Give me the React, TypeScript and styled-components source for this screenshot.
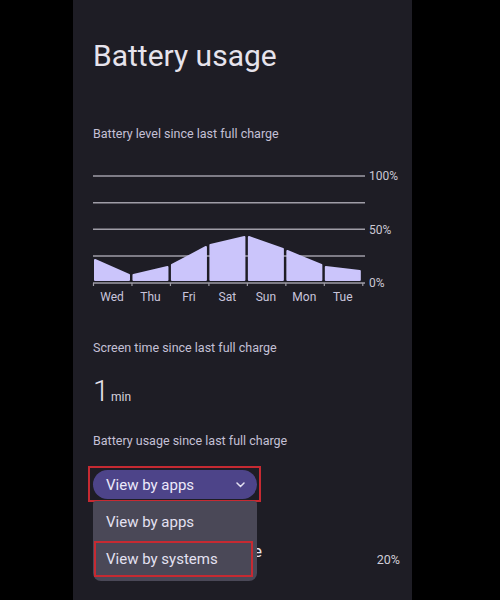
import React from 'react';
import styled, { createGlobalStyle } from 'styled-components';

const GlobalStyle = createGlobalStyle`
  html, body {
    margin: 0;
    padding: 0;
    background: #000000;
  }
  body {
    font-family: Roboto, 'Noto Sans', Arial, sans-serif;
  }
`;

const Page = styled.div`
  display: flex;
  height: 600px;
  padding-left: 73px;
  background: #000000;
`;

const Panel = styled.main`
  width: 339px;
  height: 600px;
  box-sizing: border-box;
  padding: 0 12px 0 20px;
  background: #1e1d25;
  display: flex;
  flex-direction: column;
  overflow: hidden;
`;

const Title = styled.h1`
  margin: 38px 0 0;
  font-size: 30px;
  line-height: 36px;
  font-weight: 400;
  color: #e6e3ec;
`;

const Caption = styled.div<{ $top: number }>`
  margin-top: ${(p) => p.$top}px;
  font-size: 12.5px;
  line-height: 16px;
  color: #c4c0d6;
`;

const ChartSvg = styled.svg`
  display: block;
  margin-top: 27px;
  overflow: visible;
`;

const Stat = styled.div`
  margin-top: 19px;
  display: flex;
  align-items: baseline;
  gap: 2px;
  color: #e6e3ec;
`;

const StatValue = styled.span`
  font-size: 29px;
  line-height: 32px;
  font-weight: 300;
`;

const StatUnit = styled.span`
  font-size: 12px;
  color: #d6d3de;
`;

const Highlight = styled.div`
  position: relative;
  align-self: flex-start;
  margin: 17px 0 0 -5px;
  border: 2px solid #c62a32;
  padding: 2px 2px 1px 3px;
`;

const Pill = styled.button`
  display: flex;
  align-items: center;
  justify-content: space-between;
  width: 164px;
  height: 29px;
  box-sizing: border-box;
  padding: 0 12px 0 13px;
  border: none;
  border-radius: 15px;
  background: #4d4489;
  color: #ece9fb;
  font-family: inherit;
  font-size: 15px;
`;

const Menu = styled.div`
  position: absolute;
  top: calc(100% + 1px);
  left: 3px;
  width: 164px;
  box-sizing: border-box;
  padding: 2px 4px 4px 1px;
  background: #4a4857;
  border-radius: 3px 3px 8px 8px;
  z-index: 2;
`;

const MenuItem = styled.div<{ $active?: boolean }>`
  height: ${(p) => (p.$active ? 36 : 38)}px;
  box-sizing: border-box;
  display: flex;
  align-items: center;
  padding-left: ${(p) => (p.$active ? 10 : 12)}px;
  border: ${(p) => (p.$active ? '2px solid #c62a32' : 'none')};
  color: #e4e1f2;
  font-size: 15px;
`;

const UsageRow = styled.div`
  margin-top: 33px;
  height: 48px;
  display: flex;
  align-items: center;
  justify-content: space-between;
`;

const AppLabel = styled.div`
  display: flex;
  align-items: center;
  gap: 13px;
  padding-bottom: 16px;
  font-size: 17px;
  color: #e6e3ec;
`;

const AppIcon = styled.span`
  width: 22px;
  height: 22px;
  border-radius: 50%;
  background: #3b3a45;
`;

const Percent = styled.span`
  font-size: 12.5px;
  color: #d0cdd8;
`;

// battery level at each day's start/end, in px from the top of the chart
const levels: [string, number, number][] = [
  ['Wed', 91, 106],
  ['Thu', 106, 98],
  ['Fri', 96, 78],
  ['Sat', 76, 68],
  ['Sun', 68, 80],
  ['Mon', 82, 96],
  ['Tue', 98, 102],
];

const grid = [7, 33.7, 60.3, 87];
const base = 114;
const step = 38.47;

const BatteryChart = () => (
  <ChartSvg width="309" height="134" viewBox="0 0 309 134">
    {grid.map((y) => (
      <line key={y} x1="0" x2="272" y1={y} y2={y} stroke="#9f9da7" strokeWidth="1.5" />
    ))}
    {levels.map(([day, l, r], i) => {
      const x0 = 2 + i * step;
      const x1 = x0 + 34;
      return (
        <polygon
          key={day}
          points={`${x0},${l} ${x1},${r} ${x1},111 ${x0},111`}
          fill="#cbc5fb"
          stroke="#cbc5fb"
          strokeWidth="2"
          strokeLinejoin="round"
        />
      );
    })}
    <line x1="0" x2="272" y1={base} y2={base} stroke="#9f9da7" strokeWidth="1.5" />
    {Array.from({ length: 8 }, (_, i) => (
      <line key={i} x1={0.5 + i * step} x2={0.5 + i * step} y1={base} y2={base + 3} stroke="#9f9da7" strokeWidth="1.2" />
    ))}
    <g fill="#cbc8d4" fontSize="12" fontFamily="Roboto, sans-serif">
      <text x="276" y="11">100%</text>
      <text x="276" y="65">50%</text>
      <text x="276" y="118">0%</text>
    </g>
    <g fill="#c9c5dc" fontSize="12" fontFamily="Roboto, sans-serif" textAnchor="middle">
      {levels.map(([day], i) => (
        <text key={day} x={2 + i * step + 17} y="132">
          {day}
        </text>
      ))}
    </g>
  </ChartSvg>
);

const Chevron = () => (
  <svg width="9" height="6" viewBox="0 0 9 6">
    <path d="M1 1l3.5 3.5L8 1" fill="none" stroke="#e4e1f2" strokeWidth="1.5" strokeLinecap="round" />
  </svg>
);

export default function App() {
  return (
    <Page>
      <GlobalStyle />
      <Panel>
        <Title>Battery usage</Title>
        <Caption $top={52}>Battery level since last full charge</Caption>
        <BatteryChart />
        <Caption $top={37}>Screen time since last full charge</Caption>
        <Stat>
          <StatValue>1</StatValue>
          <StatUnit>min</StatUnit>
        </Stat>
        <Caption $top={26}>Battery usage since last full charge</Caption>
        <Highlight>
          <Pill>
            View by apps
            <Chevron />
          </Pill>
          <Menu>
            <MenuItem>View by apps</MenuItem>
            <MenuItem $active>View by systems</MenuItem>
          </Menu>
        </Highlight>
        <UsageRow>
          <AppLabel>
            <AppIcon />
            Google Play Store
          </AppLabel>
          <Percent>20%</Percent>
        </UsageRow>
      </Panel>
    </Page>
  );
}
